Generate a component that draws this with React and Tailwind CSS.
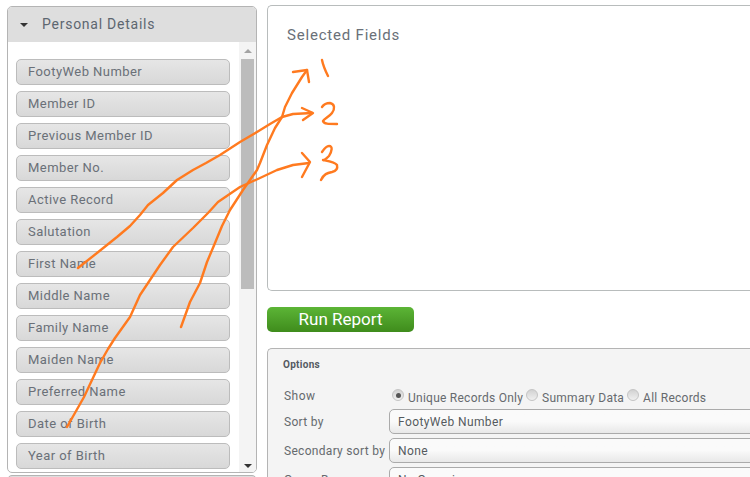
const fields = ["FootyWeb Number","Member ID","Previous Member ID","Member No.","Active Record","Salutation","First Name","Middle Name","Family Name","Maiden Name","Preferred Name","Date of Birth","Year of Birth"];

const strokes = [
  "M181 327 L190 302 L200 283 L207 262 L215 243 L222 226 L230 210 L243 190 L257 170 L260 163 L267 145 L275 128 L282 117 L285 107 L292 93 L302 77 L307 70",
  "M293 72 L307 70 L309 82",
  "M78 268 L97 253 L117 237 L130 226 L140 215 L148 205 L163 193 L177 180 L193 170 L206 163 L220 155 L240 142 L257 132 L270 124 L282 117 L293 114 L312 113",
  "M302 108 L313 113 L303 120",
  "M67 427 L84 397 L100 363 L108 349 L115 338 L130 317 L140 295 L150 280 L160 265 L173 247 L193 228 L208 213 L218 202 L240 187 L260 178 L277 170 L293 165 L309 163",
  "M302 153 L310 162 L302 177",
  "M322 60 C323 65 325 70 328 76",
  "M322 107 C324 104 327 103 330 103 C335 104 335 109 332 113 C329 117 324 119 323 121 C324 124 328 124 337 124",
  "M322 152 C324 149 326 146 329 146 C333 146 332 151 329 156 C327 158 324 160 323 160 C328 161 335 162 337 165 C338 169 336 171 332 172 C327 173 324 174 321 180",
];

function Radio({ on }) {
  return (
    <span className="relative inline-flex w-[12px] h-[12px] shrink-0 rounded-full border border-[#c4c4c4] bg-gradient-to-b from-[#d2d2d2] to-[#f0f0f0] items-center justify-center -translate-y-[1px]">
      {on && <span className="w-[5px] h-[5px] rounded-full bg-[#555555]" />}
    </span>
  );
}

function Row({ label, value }) {
  return (
    <div className="flex items-center h-[29px]">
      <span className="w-[106px] shrink-0 pl-[1px] whitespace-nowrap text-[12px] tracking-[0.3px] text-[#666a6e]">{label}</span>
      <div className="w-[400px] h-[25px] shrink-0 rounded-l-[5px] border border-[#aaaaaa] bg-gradient-to-b from-[#fafafa] via-[#fafafa] to-[#e8e8e8] flex items-center pl-[8px] text-[12px] tracking-[0.4px] text-[#555a5e]">
        {value}
      </div>
    </div>
  );
}

export default function App() {
  return (
    <div className="relative w-[750px] h-[477px] overflow-hidden bg-white" style={{ fontFamily: 'Roboto, "Liberation Sans", sans-serif' }}>
      <div className="flex items-start pl-[7px] pt-[6px] gap-[10px]">
        <div className="w-[250px] shrink-0 flex flex-col gap-[2px]">
          <div className="h-[467px] rounded-[5px] border border-[#b4b4b4] overflow-hidden flex flex-col bg-white">
            <div className="h-[35px] shrink-0 bg-[#dedede] flex items-center pl-[12px]">
              <span className="w-0 h-0 border-x-[4px] border-x-transparent border-t-[4px] border-t-[#333333] mr-[14px]" />
              <span className="text-[14px] tracking-[0.75px] text-[#5d6670]">Personal Details</span>
            </div>
            <div className="flex-1 flex min-h-0">
              <div className="w-[231px] shrink-0 flex flex-col gap-[6px] pl-[8px] pt-[17px] overflow-hidden">
                {fields.map((f) => (
                  <div key={f} className="w-[214px] h-[26px] shrink-0 rounded-[5px] border border-[#bcbcbc] bg-gradient-to-b from-[#e6e6e6] to-[#d8d8d8] flex items-center pl-[11px] text-[13px] tracking-[0.45px] text-[#6a7078]">
                    {f}
                  </div>
                ))}
              </div>
              <div className="w-[17px] shrink-0 bg-[#f4f4f4] flex flex-col items-center relative">
                <span className="mt-[7px] w-0 h-0 border-x-[4px] border-x-transparent border-b-[4px] border-b-[#a3a3a3]" />
                <div className="mt-[6px] w-[13px] h-[230px] bg-[#bcbcbc]" />
                <span className="absolute bottom-[4px] w-0 h-0 border-x-[4px] border-x-transparent border-t-[4px] border-t-[#333333]" />
              </div>
            </div>
          </div>
          <div className="h-[20px] rounded-t-[5px] border border-[#b4b4b4] bg-[#dedede]" />
        </div>

        <div className="w-[500px] shrink-0 -mt-[1px] flex flex-col">
          <div className="h-[286px] rounded-l-[5px] border border-[#b8bcbc] border-r-0 pl-[19px] pt-[19px]">
            <div className="text-[15px] leading-[20px] tracking-[0.8px] text-[#6a7078]">Selected Fields</div>
          </div>
          <div className="mt-[16px] w-[147px] h-[25px] rounded-[5px] bg-gradient-to-b from-[#5cb536] to-[#3f8c1c] flex items-center justify-center text-[17px] text-white">
            Run Report
          </div>
          <div className="mt-[16px] h-[160px] rounded-l-[5px] border border-[#b4b4b4] border-r-0 bg-[#f4f4f4] pl-[15px] pt-[9px]">
            <div className="text-[10px] leading-[14px] font-bold tracking-[0.3px] text-[#555a62]">Options</div>
            <div className="flex items-center h-[16px] mt-[16px]">
              <span className="w-[109px] shrink-0 pl-[1px] text-[12px] tracking-[0.45px] text-[#666a6e]">Show</span>
              <div className="flex items-center text-[12px] tracking-[0.25px] text-[#666a6e]">
                <Radio on />
                <span className="ml-[4px] mr-[3px] translate-y-[2px] whitespace-nowrap">Unique Records Only</span>
                <Radio />
                <span className="ml-[4px] mr-[3px] translate-y-[2px] whitespace-nowrap">Summary Data</span>
                <Radio />
                <span className="ml-[4px] translate-y-[2px] whitespace-nowrap">All Records</span>
              </div>
            </div>
            <div className="mt-[3px]">
              <Row label="Sort by" value="FootyWeb Number" />
              <Row label="Secondary sort by" value="None" />
              <Row label="Group By" value="No Grouping" />
            </div>
          </div>
        </div>
      </div>

      <svg className="absolute left-0 top-0 pointer-events-none" width="750" height="477" viewBox="0 0 750 477" fill="none" stroke="#ff7a1f" strokeWidth="2.4" strokeLinecap="round" strokeLinejoin="round">
        {strokes.map((d, i) => <path key={i} d={d} />)}
      </svg>
    </div>
  );
}
